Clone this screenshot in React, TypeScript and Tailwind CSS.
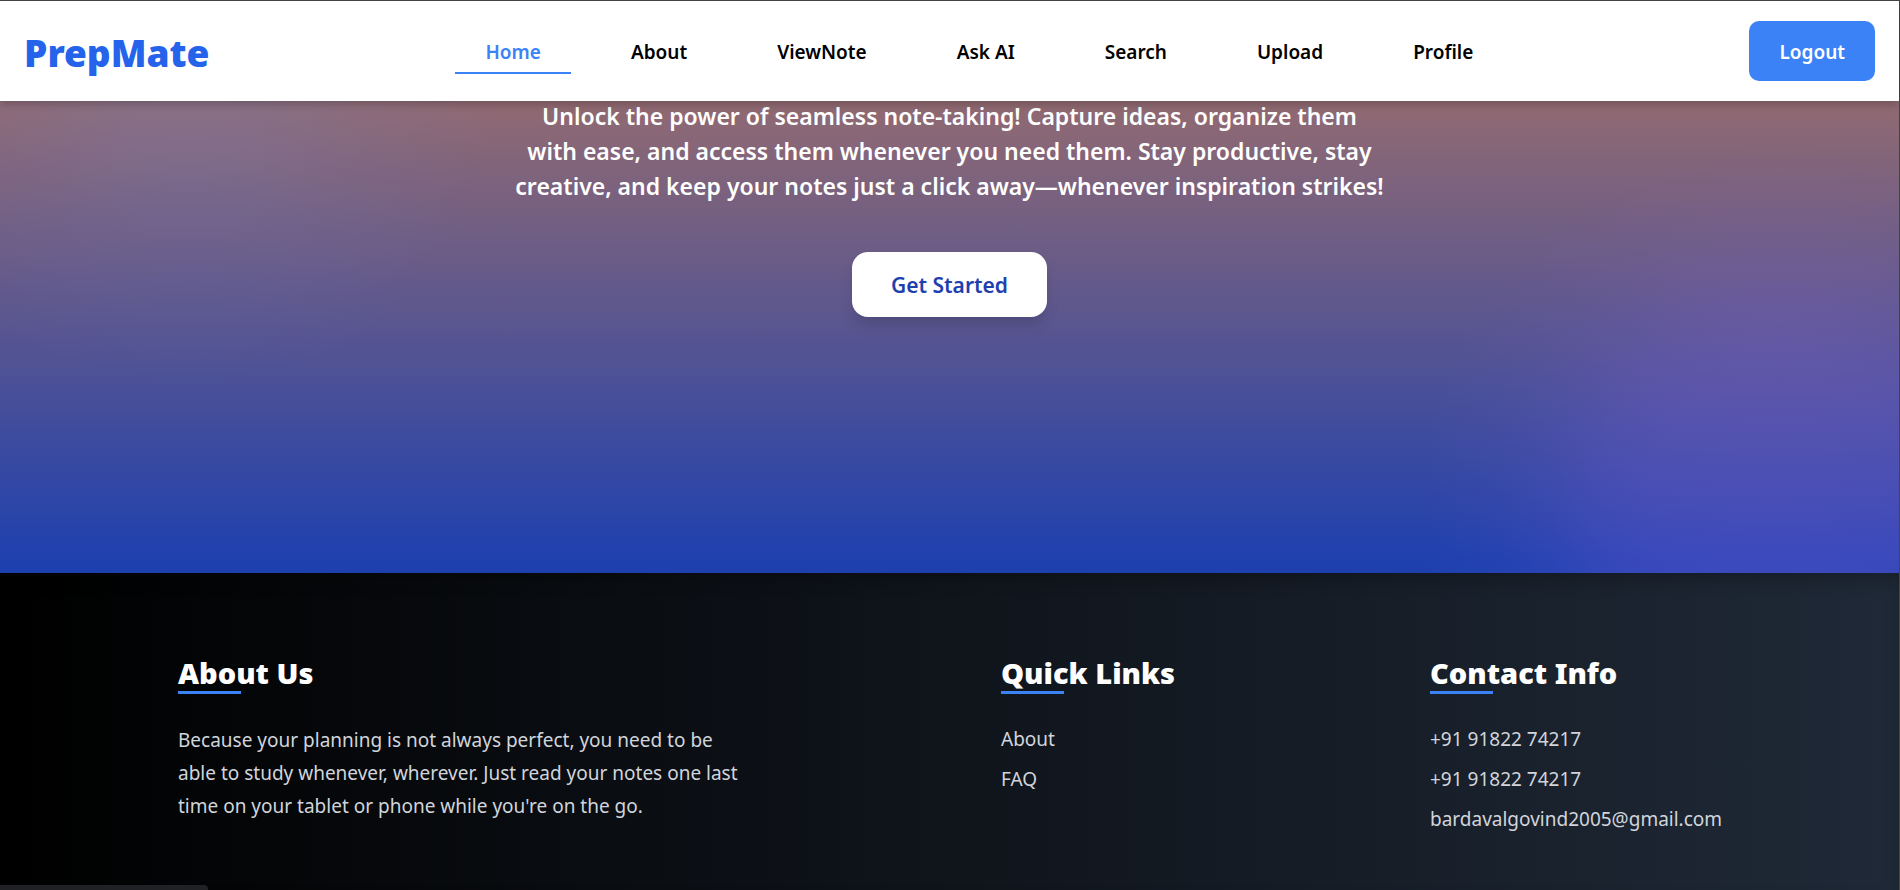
const navItems = ["Home", "About", "ViewNote", "Ask AI", "Search", "Upload", "Profile"];

function Header() {
  return (
    <header className="relative z-10 flex h-[100px] items-center justify-between bg-white px-6 shadow-[0_4px_8px_rgba(0,0,0,0.2)]">
      <a href="#home" className="pt-1 text-[37px] leading-[50px] font-black text-[#2563eb]">
        PrepMate
      </a>
      <nav>
        <ul className="flex gap-[30px]">
          {navItems.map((item, i) => (
            <li key={item}>
              <a
                href={"#" + item.toLowerCase().replace(" ", "-")}
                className={
                  i === 0
                    ? "block border-b-2 border-[#3b82f6] px-[30px] pt-2 pb-1 text-[19px] leading-8 font-semibold text-[#3b82f6]"
                    : "block border-b-2 border-transparent px-[30px] pt-2 pb-1 text-[19px] leading-8 font-semibold text-black"
                }
              >
                {item}
              </a>
            </li>
          ))}
        </ul>
      </nav>
      <button
        type="button"
        className="h-[60px] rounded-[10px] bg-[#3b82f6] px-[30px] pt-0.5 text-[19px] font-semibold text-white"
      >
        Logout
      </button>
    </header>
  );
}

function Hero() {
  return (
    <main className="flex h-[472px] flex-col items-center bg-[radial-gradient(circle_at_190px_-20px,rgba(105,145,235,0.16),rgba(105,145,235,0.14)_80px,rgba(105,145,235,0.07)_170px,transparent_310px),radial-gradient(circle_at_calc(100%_-_120px)_400px,rgba(155,105,235,0.24),rgba(155,105,235,0.22)_130px,rgba(155,105,235,0.18)_180px,rgba(155,105,235,0.11)_230px,rgba(155,105,235,0.05)_280px,transparent_360px),linear-gradient(to_bottom,#916a72,#1e40af_98%)]">
      <p className="-mt-0.5 w-[880px] max-w-full text-center text-[23px] leading-[35px] font-semibold text-white">
        Unlock the power of seamless note-taking! Capture ideas, organize them
        <br />
        with ease, and access them whenever you need them. Stay productive, stay
        <br />
        creative, and keep your notes just a click away—whenever inspiration strikes!
      </p>
      <button
        type="button"
        className="mt-12 h-[65px] rounded-2xl bg-white px-[39px] pt-0.5 text-[21px] font-semibold text-[#1e40af] shadow-[0_10px_15px_-3px_rgba(0,0,0,0.15)]"
      >
        Get Started
      </button>
    </main>
  );
}

function FooterHeading({ children }: { children: string }) {
  return (
    <>
      <h2 className="text-[29px] leading-9 font-black whitespace-nowrap text-white">{children}</h2>
      <div className="mb-[30px] h-[3px] w-[63px] bg-[#3b82f6]" />
    </>
  );
}

function Footer() {
  return (
    <footer className="flex grow justify-between bg-[linear-gradient(to_right,#000000,#1f2937)] px-[178px] pt-[82px] pb-12 text-[19px] text-[#d1d5db] shadow-[inset_0_10px_20px_-6px_rgba(0,0,0,0.3)]">
      <section className="w-[564px]">
        <FooterHeading>About Us</FooterHeading>
        <p className="leading-[33px]">
          Because your planning is not always perfect, you need to be able to study whenever, wherever. Just read your
          notes one last time on your tablet or phone while you're on the go.
        </p>
      </section>
      <section className="w-[170px]">
        <FooterHeading>Quick Links</FooterHeading>
        <ul className="flex flex-col gap-2.5 leading-[30px]">
          <li>
            <a href="#about">About</a>
          </li>
          <li>
            <a href="#faq">FAQ</a>
          </li>
        </ul>
      </section>
      <section className="w-[291px]">
        <FooterHeading>Contact Info</FooterHeading>
        <ul className="flex flex-col gap-2.5 leading-[30px]">
          <li>+91 91822 74217</li>
          <li>+91 91822 74217</li>
          <li>
            <a href="mailto:bardavalgovind2005@gmail.com">bardavalgovind2005@gmail.com</a>
          </li>
        </ul>
      </section>
    </footer>
  );
}

export default function App() {
  return (
    <div className="relative flex min-h-screen flex-col border-t border-r border-[#444444] font-['Noto_Sans',sans-serif]">
      <Header />
      <Hero />
      <Footer />
      <div className="absolute bottom-0 left-0 h-[5px] w-52 rounded-tr bg-[#202124]" />
    </div>
  );
}
